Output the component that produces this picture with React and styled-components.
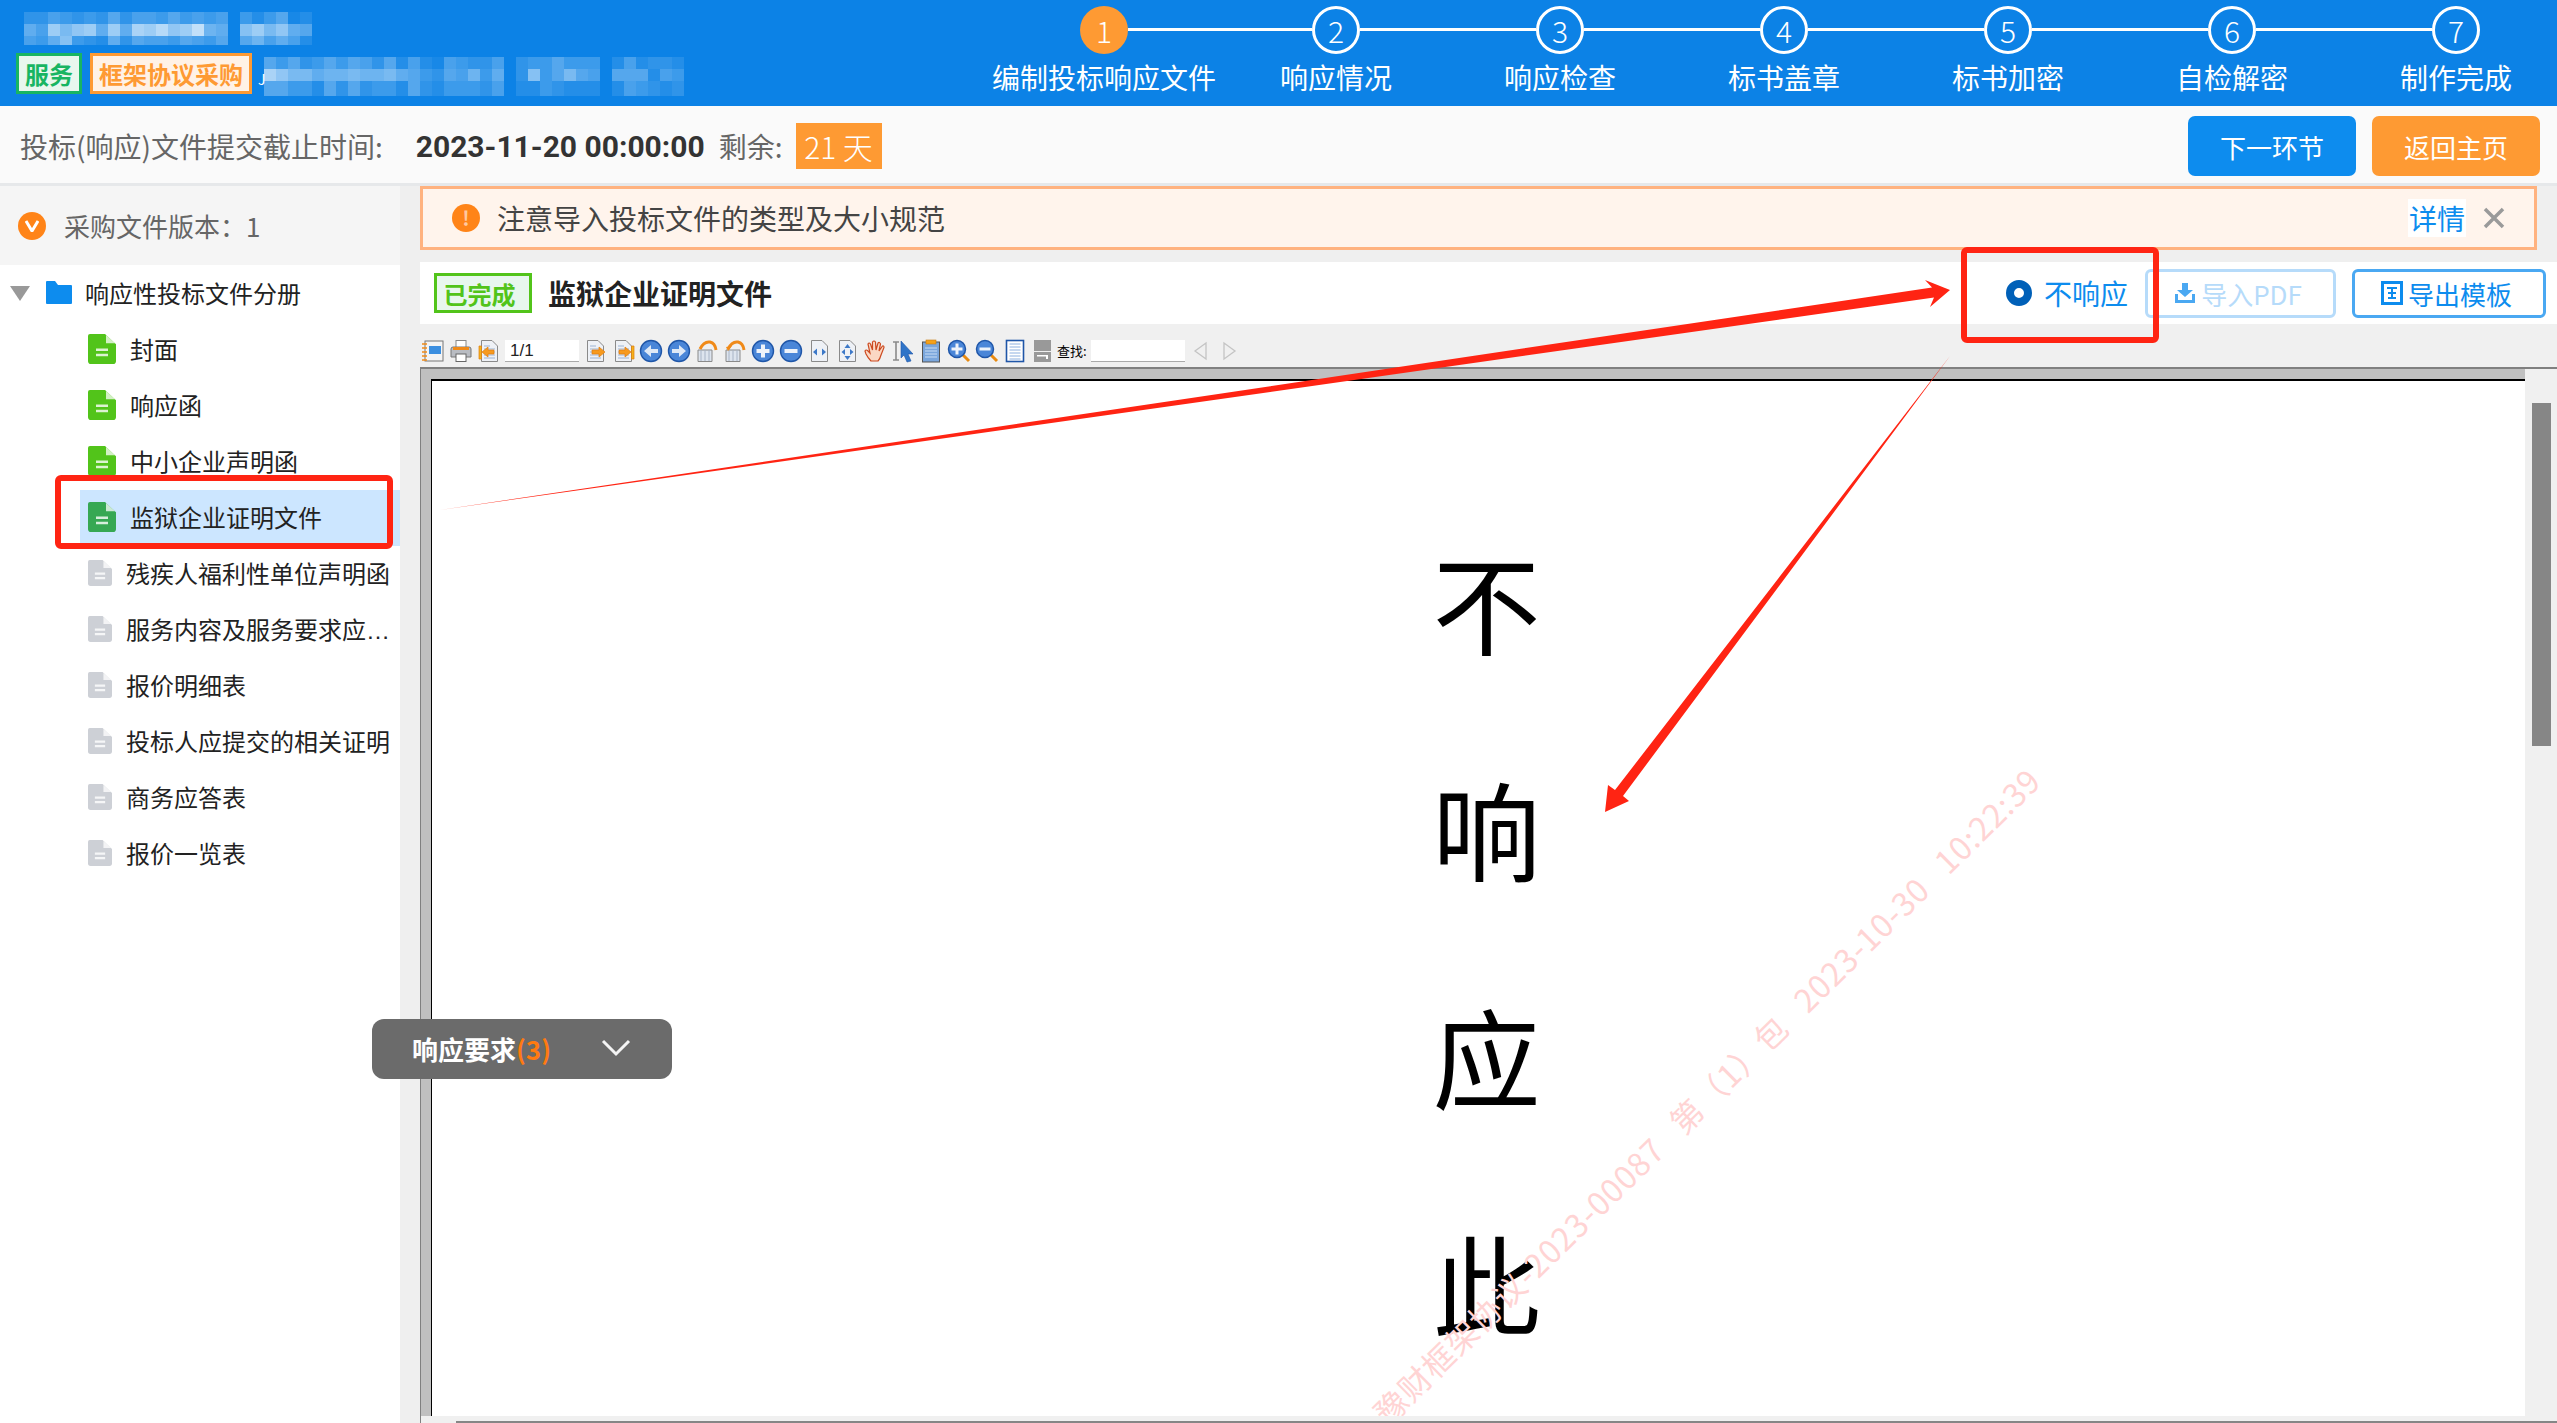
import React from 'react';
import styled, { createGlobalStyle } from 'styled-components';

const FONT = '"Noto Sans CJK SC", "Noto Sans", sans-serif';

const GlobalStyle = createGlobalStyle`
	html, body {
		margin: 0;
		padding: 0;
		background: #fff;
		overflow: hidden;
	}
	* {
		box-sizing: border-box;
	}
`;

const Page = styled.div`
	position: relative;
	display: flex;
	flex-direction: column;
	width: 2557px;
	height: 1423px;
	overflow: hidden;
	font-family: ${FONT};
	color: #222;
`;

/* ---------- header ---------- */
const Header = styled.header`
	display: flex;
	justify-content: space-between;
	flex: 0 0 106px;
	background: #0c82e6;
`;

const HeaderLeft = styled.div`
	display: flex;
	flex-direction: column;
	padding: 12px 0 0 16px;
`;

const TitleBlur = styled.div`
	padding-left: 8px;
`;

const TagRow = styled.div`
	display: flex;
	align-items: flex-start;
	margin-top: 8px;
`;

const Tag = styled.span`
	display: flex;
	align-items: center;
	justify-content: center;
	height: 41px;
	width: ${(p) => p.$width}px;
	margin-right: 8px;
	border: 3px solid ${(p) => p.$color};
	background: ${(p) => p.$bg};
	color: ${(p) => p.$color};
	font-size: 24px;
	font-weight: 700;
	line-height: 1;
`;

const NameBlur = styled.div`
	position: relative;
	margin: 4px 0 0 4px;
`;

const NameInitial = styled.span`
	position: absolute;
	left: -6px;
	top: 15px;
	color: #fff;
	font-size: 14px;
	line-height: 1;
`;

const Steps = styled.ol`
	display: flex;
	flex: 0 0 1584px;
	margin: 0 -11px 0 0;
	padding: 6px 0 0;
	list-style: none;
`;

const Step = styled.li`
	position: relative;
	display: flex;
	flex-direction: column;
	align-items: center;
	flex: 0 0 224px;

	&:first-child {
		flex-basis: 240px;
	}

	&:not(:last-child)::after {
		content: '';
		position: absolute;
		top: 22px;
		left: calc(50% + 24px);
		width: 176px;
		height: 3px;
		background: #fff;
	}

	&:first-child::after {
		width: 184px;
	}
`;

const StepDot = styled.span`
	display: flex;
	align-items: center;
	justify-content: center;
	width: 48px;
	height: 48px;
	border-radius: 50%;
	border: ${(p) => (p.$active ? 'none' : '3px solid #fff')};
	background: ${(p) => (p.$active ? '#fe9a33' : 'transparent')};
	color: #fff;
	font-size: 30px;
	font-weight: 300;
	line-height: 1;
`;

const StepLabel = styled.span`
	margin-top: 6px;
	color: #fff;
	font-size: 28px;
	line-height: 34px;
	white-space: nowrap;
`;

/* ---------- deadline bar ---------- */
const DeadlineBar = styled.div`
	display: flex;
	align-items: center;
	flex: 0 0 80px;
	padding: 3px 17px 0 20px;
	background: #fafafa;
	border-bottom: 3px solid #e6e8ea;
	font-size: 28px;
	color: #666;
`;

const DeadlineDate = styled.span`
	margin: 0 14px 0 33px;
	color: #333;
	font-family: Roboto, ${FONT};
	font-size: 30px;
	font-weight: 700;
	white-space: nowrap;
`;

const DaysLeft = styled.span`
	display: flex;
	align-items: center;
	justify-content: center;
	width: 86px;
	height: 46px;
	margin-left: 13px;
	background: #fe9a33;
	color: #fff;
	font-size: 30px;
	font-weight: 300;
`;

const BarButton = styled.button`
	width: 168px;
	height: 60px;
	margin-left: ${(p) => (p.$first ? 'auto' : '16px')};
	border: none;
	border-radius: 7px;
	background: ${(p) => p.$bg};
	color: #fff;
	font-family: ${FONT};
	font-size: 26px;
	padding: 0;
`;

/* ---------- body ---------- */
const Body = styled.div`
	display: flex;
	flex: 1;
	min-height: 0;
	background: #efefef;
`;

const Sidebar = styled.aside`
	flex: 0 0 400px;
	background: #fff;
	display: flex;
	flex-direction: column;
`;

const VersionRow = styled.div`
	display: flex;
	align-items: center;
	flex: 0 0 79px;
	padding-left: 18px;
	background: #f5f5f5;
	color: #666;
	font-size: 26px;
`;

const VersionMark = styled.span`
	display: flex;
	align-items: center;
	justify-content: center;
	width: 28px;
	height: 28px;
	margin-right: 18px;
	border-radius: 50%;
	background: #ff8418;
`;

const RootRow = styled.div`
	display: flex;
	align-items: center;
	height: 57px;
	padding: 0 0 2px 10px;
	font-size: 24px;
`;

const Tree = styled.ul`
	margin: 0;
	padding: 0 0 0 80px;
	list-style: none;
`;

const TreeItem = styled.li`
	display: flex;
	align-items: center;
	height: 56px;
	padding: 0 0 3px 8px;
	background: ${(p) => (p.$selected ? '#cce6ff' : 'transparent')};
	font-size: 24px;
	gap: 14px;
`;

const TreeText = styled.span`
	display: block;
	max-width: 266px;
	overflow: hidden;
	font-family: "Liberation Sans", ${FONT};
	white-space: nowrap;
	text-overflow: ellipsis;
`;

const Main = styled.main`
	display: flex;
	flex-direction: column;
	flex: 1;
	min-width: 0;
	padding-left: 20px;
`;

const Notice = styled.div`
	display: flex;
	align-items: center;
	flex: 0 0 64px;
	margin-right: 20px;
	padding: 0 29px;
	border: 3px solid #ffb27f;
	background: #fff4ec;
	font-size: 28px;
	color: #444;
`;

const NoticeIcon = styled.span`
	display: flex;
	align-items: center;
	justify-content: center;
	width: 28px;
	height: 28px;
	margin-right: 17px;
	border-radius: 50%;
	background: #ff8418;
	color: #ffc9a0;
	font-size: 20px;
	font-weight: 700;
	line-height: 1;
`;

const NoticeLink = styled.span`
	margin-left: auto;
	padding: 0 1px;
	background: #fff;
	color: #0d8cee;
	line-height: 38px;
`;

const TitleRow = styled.div`
	display: flex;
	align-items: center;
	flex: 0 0 62px;
	margin-top: 12px;
	padding: 0 11px 0 14px;
	background: #fff;
`;

const DoneTag = styled.span`
	display: flex;
	align-items: center;
	justify-content: center;
	width: 98px;
	height: 40px;
	padding-right: 7px;
	border: 3px solid #52c41a;
	background: #e8f7ee;
	color: #52c41a;
	font-size: 24px;
	font-weight: 700;
`;

const DocTitle = styled.h1`
	margin: 0 0 0 16px;
	font-size: 28px;
	font-weight: 700;
	color: #222;
`;

const RadioOption = styled.label`
	display: flex;
	align-items: center;
	margin-left: auto;
	color: #0d8cee;
	font-size: 28px;
`;

const RadioDot = styled.span`
	width: 26px;
	height: 26px;
	margin-right: 12px;
	border-radius: 50%;
	border: 8px solid #0060b8;
	background: #fff;
`;

const OutlineButton = styled.button`
	display: flex;
	align-items: center;
	justify-content: center;
	gap: 5px;
	width: ${(p) => p.$width}px;
	height: 49px;
	margin-left: ${(p) => p.$gap}px;
	padding: 0 5px 0 0;
	border: 3px solid ${(p) => (p.$disabled ? '#b6dbfa' : '#4aa8f2')};
	border-radius: 6px;
	background: #fff;
	color: ${(p) => (p.$disabled ? '#b6dbfa' : '#0d8cee')};
	font-family: ${FONT};
	font-size: 26px;
`;

/* ---------- pdf viewer ---------- */
const ToolBar = styled.div`
	display: flex;
	align-items: center;
	gap: 4px;
	flex: 0 0 43px;
	padding: 10px 0 0 1px;
	background: #f0f0f0;
`;

const ToolIcon = styled.svg`
	flex: 0 0 24px;
	width: 24px;
	height: 24px;
`;

const ToolInput = styled.div`
	display: flex;
	align-items: center;
	width: ${(p) => p.$width}px;
	height: 22px;
	padding-left: 5px;
	background: #fff;
	border-bottom: 1px solid #aaa;
	color: #222;
	font-family: "Liberation Sans", sans-serif;
	font-size: 17px;
	line-height: 1;
`;

const FindLabel = styled.span`
	margin: 0 0 0 -2px;
	color: #000;
	font-size: 13px;
	line-height: 1;
	white-space: nowrap;
`;

const Viewer = styled.div`
	display: flex;
	flex-direction: column;
	flex: 1;
	min-height: 0;
	border-top: 2px solid #808080;
	border-left: 1px solid #808080;
`;

const ViewerBody = styled.div`
	display: flex;
	flex: 1;
	min-height: 0;
`;

const DocFrame = styled.div`
	display: flex;
	flex: 1;
	min-width: 0;
	padding: 10px 0 0 10px;
	background: #c0c0c0;
`;

const DocPage = styled.div`
	position: relative;
	flex: 1;
	overflow: hidden;
	padding: 106px 0 0 16px;
	background: #fff;
	border-top: 2px solid #000;
	border-left: 1px solid #000;
	text-align: center;
`;

const DocLine = styled.div`
	height: 227px;
	color: #000;
	font-size: 108px;
	font-weight: 400;
	line-height: 227px;
`;

const Watermark = styled.div`
	position: absolute;
	left: 1274px;
	top: 714px;
	transform: translate(-50%, -50%) rotate(-44.5deg);
	color: #ffd4d4;
	font-size: 32px;
	letter-spacing: 1px;
	word-spacing: 15px;
	white-space: pre;
`;

const VScroll = styled.div`
	flex: 0 0 32px;
	padding: 34px 6px 0 7px;
	background: #f0f0f0;
`;

const VThumb = styled.div`
	height: 343px;
	background: #868686;
`;

const HScroll = styled.div`
	flex: 0 0 7px;
	padding: 5px 0 0 35px;
	background: #f0f0f0;
`;

const HThumb = styled.div`
	height: 2px;
	background: #868686;
`;

/* ---------- things lying over the page ---------- */
const RequirePill = styled.div`
	position: absolute;
	left: 372px;
	top: 1019px;
	display: flex;
	align-items: center;
	width: 300px;
	height: 60px;
	padding: 0 0 2px 40px;
	border-radius: 12px;
	background: #6b6b6b;
	color: #fff;
	font-size: 26px;
	font-weight: 700;
`;

const RequireCount = styled.span`
	color: #ff7a10;
`;

const Annotations = styled.svg`
	position: absolute;
	left: 0;
	top: 0;
	pointer-events: none;
`;

const Mosaic = ({ rows, tile = 12, height, width }) => (
	<svg width={width} height={height} style={{ display: 'block' }}>
		{rows.map((row, r) =>
			row.map((a, c) => <rect key={r + '-' + c} x={c * tile} y={r * tile} width={tile} height={r === rows.length - 1 ? height - r * tile : tile} fill="#fff" fillOpacity={a} />)
		)}
	</svg>
);

const titleBlur = [
	[0.15, 0.15, 0.25, 0.2, 0.15, 0.2, 0.15, 0.3, 0.15, 0.25, 0.25, 0.2, 0.3, 0.2, 0.25, 0.2, 0.25, 0, 0.2, 0.1, 0.2, 0.3, 0.05, 0.1],
	[0.35, 0.25, 0.6, 0.45, 0.55, 0.6, 0.35, 0.6, 0.35, 0.65, 0.6, 0.7, 0.55, 0.6, 0.75, 0.4, 0.35, 0, 0.5, 0.6, 0.45, 0.55, 0.35, 0.3],
	[0.25, 0.2, 0.35, 0.5, 0.2, 0.15, 0.1, 0.35, 0.15, 0.3, 0.25, 0.25, 0.2, 0.3, 0.25, 0.2, 0.3, 0, 0.3, 0.4, 0.25, 0.35, 0.25, 0.1],
];

const nameBlur = [
	[0.3, 0.2, 0.3, 0.15, 0.2, 0.3, 0.2, 0.3, 0.25, 0.15, 0.3, 0.1, 0.25, 0.1, 0.05, 0.25, 0.2, 0.15, 0.15, 0.25, 0, 0.15, 0.2, 0.2, 0.3, 0.2, 0.2, 0.2, 0, 0.1, 0.25, 0.1, 0.15, 0.15, 0.1],
	[0.65, 0.55, 0.45, 0.45, 0.35, 0.4, 0.4, 0.45, 0.4, 0.4, 0.45, 0.35, 0.3, 0.2, 0.15, 0.3, 0.25, 0.4, 0.2, 0.35, 0, 0.15, 0.5, 0.2, 0.3, 0.45, 0.3, 0.25, 0, 0.3, 0.3, 0.3, 0.1, 0.25, 0.2],
	[0.3, 0.3, 0.2, 0.2, 0.1, 0.3, 0.15, 0.3, 0.15, 0.2, 0.2, 0.1, 0.3, 0.15, 0.1, 0.2, 0.2, 0.2, 0.15, 0.25, 0, 0.1, 0.1, 0.2, 0.15, 0.1, 0.1, 0.1, 0, 0.1, 0.25, 0.2, 0.15, 0.1, 0.15],
];

const FileIcon = ({ color, w, h }) => (
	<svg width={w} height={h} viewBox="0 0 28 29" preserveAspectRatio="none" style={{ flex: 'none' }}>
		<path d="M2 0H17L28 10V26Q28 29 25 29H3Q0 29 0 26V2Q0 0 2 0Z" fill={color} />
		<path d="M18 1V9H27Z" fill="#fff" fillOpacity="0.75" />
		<path d="M8 14H20V16.5H8ZM8 19H20V21.5H8Z" fill="#fff" fillOpacity="0.8" />
	</svg>
);

const FolderIcon = () => (
	<svg width="26" height="23" viewBox="0 0 26 23" style={{ flex: 'none', margin: '0 13px 0 16px' }}>
		<path d="M0 1Q0 0 1 0H9L12 4H25Q26 4 26 5V22Q26 23 25 23H1Q0 23 0 22Z" fill="#0d8cee" />
	</svg>
);

const Arrow = () => (
	<svg width="20" height="16" viewBox="0 0 20 16" style={{ flex: 'none' }}>
		<path d="M0 1H20L10 16Z" fill="#999" />
	</svg>
);

const docOutline = <path d="M4.5 1.5H15L20.5 7V22.5H4.5Z" fill="#eef1f6" stroke="#8a8a8a" />;
const docLines = <path d="M7 7H13M7 10H18M7 13H18M7 16H18M7 19H18" stroke="#9db4d4" />;
const blueBall = <circle cx="12" cy="12" r="10.5" fill="#4a86d8" stroke="#1f56a8" strokeWidth="1.4" />;
const rotateBase = (
	<>
		<path d="M3 11H17V22.5H3Z" fill="#dde4ee" stroke="#8a8a8a" />
		<path d="M6 11V22M10 11V22M14 11V22" stroke="#a8b4c6" />
		<path d="M5 10Q9 2 15 3Q20 4 21 11" fill="none" stroke="#f08a18" strokeWidth="3" />
	</>
);
const lens = (
	<>
		<path d="M14 14L22 22" stroke="#e88a10" strokeWidth="3" />
		<circle cx="10" cy="10" r="8.5" fill="#4a86d8" stroke="#1f56a8" strokeWidth="1.5" />
	</>
);

const toolDrawings = {
	bookmark: (
		<>
			<rect x="4" y="2" width="18" height="20" fill="#f4f4f4" stroke="#777" />
			<rect x="8" y="7" width="12" height="8" fill="#3c8fe0" />
			<path d="M1 5H6M1 9H6M1 13H6M1 17H6M1 21H6" stroke="#f08a18" strokeWidth="1.6" />
		</>
	),
	print: (
		<>
			<rect x="7" y="1.5" width="10" height="8" fill="#fff" stroke="#888" />
			<path d="M2 10Q2 8 4 8H20Q22 8 22 10V18H2Z" fill="#b9bcc2" stroke="#777" />
			<rect x="4" y="8" width="16" height="3" fill="#f08a18" />
			<rect x="7" y="15" width="10" height="7.5" fill="#fff" stroke="#666" />
		</>
	),
	first: (
		<>
			{docOutline}
			{docLines}
			<path d="M2 7H4.5V20H2Z" fill="#f5b21a" stroke="#e07c10" strokeWidth="0.7" />
			<path d="M5 13L11 8V11H17V15H11V18Z" fill="#f79a1e" stroke="#e07c10" strokeWidth="0.7" />
		</>
	),
	next: (
		<>
			{docOutline}
			{docLines}
			<path d="M22 13L16 8V11H9V15H16V18Z" fill="#f79a1e" stroke="#e07c10" strokeWidth="0.7" />
		</>
	),
	last: (
		<>
			{docOutline}
			{docLines}
			<path d="M20 13L14 8V11H8V15H14V18Z" fill="#f79a1e" stroke="#e07c10" strokeWidth="0.7" />
			<path d="M20.5 7H23V20H20.5Z" fill="#f5b21a" stroke="#e07c10" strokeWidth="0.7" />
		</>
	),
	back: (
		<>
			{blueBall}
			<path d="M5 12L12 6V10H19V14H12V18Z" fill="#dfe9f6" />
		</>
	),
	forward: (
		<>
			{blueBall}
			<path d="M19 12L12 6V10H5V14H12V18Z" fill="#dfe9f6" />
		</>
	),
	rotate: rotateBase,
	rotate2: (
		<>
			{rotateBase}
			<path d="M3 8L9 7L5 12Z" fill="#f08a18" />
		</>
	),
	plus: (
		<>
			{blueBall}
			<path d="M10 5.5H14V10H18.5V14H14V18.5H10V14H5.5V10H10Z" fill="#eef3fa" />
		</>
	),
	minus: (
		<>
			{blueBall}
			<rect x="5.5" y="10" width="13" height="4" fill="#eef3fa" />
		</>
	),
	fitWidth: (
		<>
			{docOutline}
			<path d="M6 13L10 9.5V16.5ZM19 13L15 9.5V16.5Z" fill="#3c78c8" />
		</>
	),
	fitHeight: (
		<>
			{docOutline}
			<path d="M12.5 5L15.5 9H9.5ZM12.5 21L15.5 17H9.5ZM6.5 13L10 10V16ZM18.5 13L15 10V16Z" fill="#3c78c8" />
		</>
	),
	hand: (
		<path
			d="M8 22Q5 19 3 15L2 12Q3 10 5 12L7 14L5 5Q6 3 7.5 5L9.5 11L9.5 3Q11 1 12.5 3L13 11L15 4Q16.5 2.5 17.5 5L16 12L19.5 7Q21 6.5 21 8.5L18 16Q17 20 15 22Z"
			fill="#fbd8c4"
			stroke="#cc4a20"
			strokeWidth="1.2"
		/>
	),
	select: (
		<>
			<path d="M2 3H8M2 21H8M5 3V21" stroke="#8a8a8a" strokeWidth="1.6" />
			<path d="M10 2L22 15H17L20 22L16 23L13 16L10 19Z" fill="#2f74c8" stroke="#1f56a8" strokeWidth="0.6" />
		</>
	),
	clip: (
		<>
			<rect x="3.5" y="3" width="17" height="20" fill="#7aa6dc" stroke="#555" />
			<rect x="7" y="1" width="10" height="4" fill="#f5a21a" stroke="#c87c10" strokeWidth="0.6" />
			<path d="M6 9H18M6 12H18M6 15H18M6 18H18" stroke="#c8dcf4" />
		</>
	),
	zoomIn: (
		<>
			{lens}
			<path d="M8.5 4.5H11.5V8.5H15.5V11.5H11.5V15.5H8.5V11.5H4.5V8.5H8.5Z" fill="#eef3fa" />
		</>
	),
	zoomOut: (
		<>
			{lens}
			<rect x="4.5" y="8.5" width="11" height="3" fill="#eef3fa" />
		</>
	),
	list: (
		<>
			<rect x="3.5" y="1.5" width="17" height="21" fill="#fff" stroke="#1f56a8" strokeWidth="1.6" />
			<path d="M6.5 5H17.5M6.5 8H17.5M6.5 11H17.5M6.5 14H17.5M6.5 17H17.5M6.5 20H17.5" stroke="#8db0e0" />
		</>
	),
	split: (
		<>
			<rect x="3" y="1" width="17" height="11" fill="#999" />
			<rect x="3" y="13" width="17" height="10" fill="#999" />
			<path d="M6 16H17V20H15V17.5H6Z" fill="#fff" />
		</>
	),
	prev: <path d="M17 4V20L6 12Z" fill="none" stroke="#c4c4c4" strokeWidth="1.3" />,
	after: <path d="M7 4V20L18 12Z" fill="none" stroke="#c4c4c4" strokeWidth="1.3" />,
};

const Tool = ({ name }) => <ToolIcon viewBox="0 0 24 24">{toolDrawings[name]}</ToolIcon>;

const stepList = ['编制投标响应文件', '响应情况', '响应检查', '标书盖章', '标书加密', '自检解密', '制作完成'];

const fileList = [
	{ name: '封面', done: true },
	{ name: '响应函', done: true },
	{ name: '中小企业声明函', done: true },
	{ name: '监狱企业证明文件', done: true, selected: true },
	{ name: '残疾人福利性单位声明函' },
	{ name: '服务内容及服务要求应答表' },
	{ name: '报价明细表' },
	{ name: '投标人应提交的相关证明' },
	{ name: '商务应答表' },
	{ name: '报价一览表' },
];

const App = () => {
	return (
		<Page>
			<GlobalStyle />
			<Header>
				<HeaderLeft>
					<TitleBlur>
						<Mosaic rows={titleBlur} width={288} height={33} />
					</TitleBlur>
					<TagRow>
						<Tag $width={66} $color="#18b562" $bg="#e8f7ee">服务</Tag>
						<Tag $width={162} $color="#fe9a33" $bg="#fff2e6">框架协议采购</Tag>
						<NameBlur>
							<NameInitial>J</NameInitial>
							<Mosaic rows={nameBlur} width={420} height={39} />
						</NameBlur>
					</TagRow>
				</HeaderLeft>
				<Steps>
					{stepList.map((label, i) => (
						<Step key={label}>
							<StepDot $active={i === 0}>{i + 1}</StepDot>
							<StepLabel>{label}</StepLabel>
						</Step>
					))}
				</Steps>
			</Header>

			<DeadlineBar>
				投标(响应)文件提交截止时间:
				<DeadlineDate>2023-11-20 00:00:00</DeadlineDate>
				剩余:
				<DaysLeft>21 天</DaysLeft>
				<BarButton $first $bg="#0d8cee">下一环节</BarButton>
				<BarButton $bg="#fe9a33">返回主页</BarButton>
			</DeadlineBar>

			<Body>
				<Sidebar>
					<VersionRow>
						<VersionMark>
							<svg width="14" height="12" viewBox="0 0 14 12">
								<path d="M1 1L7 11L13 1" fill="none" stroke="#fff" strokeWidth="3" />
							</svg>
						</VersionMark>
						采购文件版本：1
					</VersionRow>
					<RootRow>
						<Arrow />
						<FolderIcon />
						响应性投标文件分册
					</RootRow>
					<Tree>
						{fileList.map((file) => (
							<TreeItem key={file.name} $selected={file.selected}>
								{file.done ? (
									<FileIcon color={file.selected ? '#36a853' : '#52c41a'} w={28} h={30} />
								) : (
									<FileIcon color="#cdd0d6" w={24} h={26} />
								)}
								<TreeText>{file.name}</TreeText>
							</TreeItem>
						))}
					</Tree>
				</Sidebar>

				<Main>
					<Notice>
						<NoticeIcon>!</NoticeIcon>
						注意导入投标文件的类型及大小规范
						<NoticeLink>详情</NoticeLink>
						<svg width="22" height="22" viewBox="0 0 22 22" style={{ marginLeft: 17, flex: 'none' }}>
							<path d="M2 2L20 20M20 2L2 20" stroke="#9a9a9a" strokeWidth="3.5" />
						</svg>
					</Notice>

					<TitleRow>
						<DoneTag>已完成</DoneTag>
						<DocTitle>监狱企业证明文件</DocTitle>
						<RadioOption>
							<RadioDot />
							不响应
						</RadioOption>
						<OutlineButton $width={191} $gap={17} $disabled>
							<svg width="22" height="22" viewBox="0 0 22 22">
								<path d="M8 1H14V8H19L11 15L3 8H8Z" fill="#4aa8f2" />
								<path d="M1 12V21H21V12H18V18H4V12Z" fill="#4aa8f2" />
							</svg>
							导入PDF
						</OutlineButton>
						<OutlineButton $width={194} $gap={16}>
							<svg width="22" height="24" viewBox="0 0 22 24">
								<rect x="1.5" y="1.5" width="19" height="21" fill="none" stroke="#0d8cee" strokeWidth="3" />
								<path d="M6 7H16M11 7V17M7 12H15M7 17H15" stroke="#0d8cee" strokeWidth="2" />
							</svg>
							导出模板
						</OutlineButton>
					</TitleRow>

					<ToolBar>
						<Tool name="bookmark" />
						<Tool name="print" />
						<Tool name="first" />
						<ToolInput $width={74}>1/1</ToolInput>
						<Tool name="next" />
						<Tool name="last" />
						<Tool name="back" />
						<Tool name="forward" />
						<Tool name="rotate" />
						<Tool name="rotate2" />
						<Tool name="plus" />
						<Tool name="minus" />
						<Tool name="fitWidth" />
						<Tool name="fitHeight" />
						<Tool name="hand" />
						<Tool name="select" />
						<Tool name="clip" />
						<Tool name="zoomIn" />
						<Tool name="zoomOut" />
						<Tool name="list" />
						<Tool name="split" />
						<FindLabel>查找:</FindLabel>
						<ToolInput $width={94} />
						<Tool name="prev" />
						<Tool name="after" />
					</ToolBar>

					<Viewer>
						<ViewerBody>
							<DocFrame>
								<DocPage>
									<DocLine>不</DocLine>
									<DocLine>响</DocLine>
									<DocLine>应</DocLine>
									<DocLine>此</DocLine>
									<Watermark>豫财框架协议-2023-00087 第（1）包 2023-10-30 10:22:39</Watermark>
								</DocPage>
							</DocFrame>
							<VScroll>
								<VThumb />
							</VScroll>
						</ViewerBody>
						<HScroll>
							<HThumb />
						</HScroll>
					</Viewer>
				</Main>
			</Body>

			<RequirePill>
				响应要求<RequireCount>(3)</RequireCount>
				<svg width="30" height="18" viewBox="0 0 30 18" style={{ marginLeft: 50 }}>
					<path d="M2 2L15 15L28 2" fill="none" stroke="#f4f4f4" strokeWidth="3" />
				</svg>
			</RequirePill>

			<Annotations width="2557" height="1423">
				<rect x="58" y="478" width="332" height="68" rx="3" fill="none" stroke="#ff2413" strokeWidth="6" />
				<rect x="1964" y="250" width="192" height="90" rx="3" fill="none" stroke="#ff2413" strokeWidth="6" />
				<path d="M440 510L1932 287.5L1925 280L1950 290L1930 307L1934 297.5Z" fill="#ff2413" />
				<path d="M1950 356L1623 796L1629 801L1605 812L1608 785L1615 790Z" fill="#ff2413" />
			</Annotations>
		</Page>
	);
};

export default App;
